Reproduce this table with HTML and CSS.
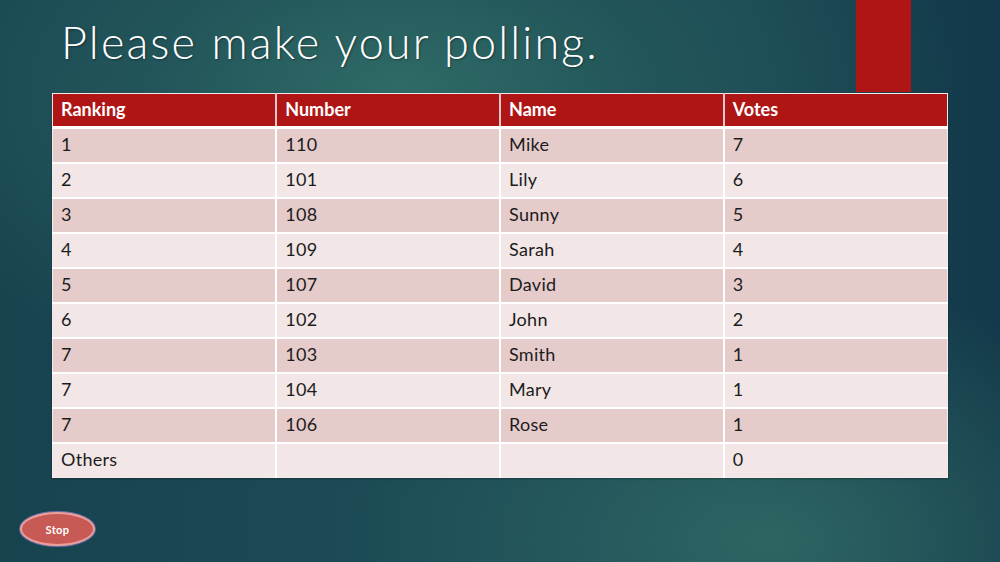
FILE: index.html
```html
<!DOCTYPE html>
<html>
<head>
<meta charset="utf-8">
<link rel="stylesheet" href="styles.css">
</head>
<body>
<div class="slide">
  <div class="accent"></div>
  <h1 class="title">Please make your polling.</h1>
  <table class="poll">
    <thead>
      <tr><th>Ranking</th><th>Number</th><th>Name</th><th>Votes</th></tr>
    </thead>
    <tbody>
      <tr><td>1</td><td>110</td><td>Mike</td><td>7</td></tr>
      <tr><td>2</td><td>101</td><td>Lily</td><td>6</td></tr>
      <tr><td>3</td><td>108</td><td>Sunny</td><td>5</td></tr>
      <tr><td>4</td><td>109</td><td>Sarah</td><td>4</td></tr>
      <tr><td>5</td><td>107</td><td>David</td><td>3</td></tr>
      <tr><td>6</td><td>102</td><td>John</td><td>2</td></tr>
      <tr><td>7</td><td>103</td><td>Smith</td><td>1</td></tr>
      <tr><td>7</td><td>104</td><td>Mary</td><td>1</td></tr>
      <tr><td>7</td><td>106</td><td>Rose</td><td>1</td></tr>
      <tr><td>Others</td><td></td><td></td><td>0</td></tr>
    </tbody>
  </table>
  <div class="footer">
    <button class="stop">Stop</button>
  </div>
</div>
</body>
</html>
```
FILE: styles.css
```css
html, body {
  margin: 0;
  padding: 0;
}
body {
  width: 1000px;
  height: 562px;
  overflow: hidden;
  font-family: "Lato", "Open Sans", sans-serif;
}
.slide {
  position: relative;
  width: 1000px;
  height: 562px;
  box-sizing: border-box;
  padding: 0 52px 0 52px;
  background:
    radial-gradient(ellipse 420px 260px at 770px 540px, rgba(52,112,104,0.75), rgba(52,112,104,0) 100%),
    radial-gradient(ellipse 560px 300px at 400px 90px, #2f6b66 0%, #22555a 45%, rgba(24,68,80,0) 100%),
    linear-gradient(90deg, #17434f 0%, #1c4b56 40%, #1a4754 70%, #13394a 100%);
}
.accent {
  position: absolute;
  left: 856px;
  top: 0;
  width: 55px;
  height: 92px;
  background: #b01515;
}
.title {
  margin: 0;
  height: 93px;
  box-sizing: border-box;
  padding: 16px 0 0 9px;
  font-family: "Lato", sans-serif;
  font-weight: 300;
  font-size: 45px;
  line-height: 52px;
  color: #ffffff;
  letter-spacing: 2.1px;
  text-shadow: 1px 1px 2px rgba(0,0,0,0.4);
}
.poll {
  position: relative;
  width: 896px;
  border-collapse: collapse;
  table-layout: fixed;
  background: #f2e6e6;
  border: 1px solid #f4eaea;
  box-shadow: 0 1px 2px rgba(0,0,0,0.3);
}
.poll th, .poll td {
  text-align: left;
  padding: 0 0 3px 8px;
  font-size: 18px;
  border-left: 2px solid #ffffff;
}
.poll th:first-child, .poll td:first-child {
  border-left: none;
}
.poll th {
  height: 29px;
  background: #b01515;
  color: #ffffff;
  font-weight: 700;
  border-bottom: 3px solid #ffffff;
  border-left-color: #e8c8c8;
}
.poll td {
  height: 30px;
  color: #1c1c1c;
  font-weight: 400;
  border-top: 2px solid #ffffff;
  letter-spacing: 0.3px;
}
.poll tbody tr:first-child td {
  border-top: none;
}
.poll tbody tr:nth-child(odd) td {
  background: #e6cbcb;
}
.poll tbody tr:nth-child(even) td {
  background: #f2e6e6;
}
.footer {
  display: flex;
  padding: 34px 0 0 0;
  margin-left: -32px;
}
.stop {
  width: 75px;
  height: 34px;
  border-radius: 50%;
  background: #c85a55;
  border: 2px solid #ec9e9a;
  box-shadow: 0 0 0 1px #6a6fa6;
  color: #ffffff;
  font-family: "Lato", sans-serif;
  font-weight: 700;
  font-size: 11px;
  letter-spacing: 0.4px;
  padding: 0;
}
```
